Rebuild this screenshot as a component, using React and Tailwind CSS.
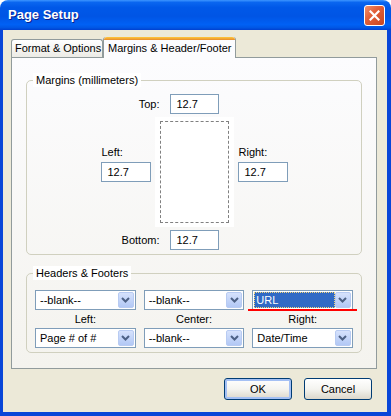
import React from 'react'

function Input({ value, className = '' }) {
  return (
    <div className={`flex h-[20px] items-center border border-[#7f9db9] bg-white pl-[6px] ${className}`}>
      {value}
    </div>
  )
}

function DropButton() {
  return (
    <div className="flex h-[16px] w-[16px] shrink-0 items-center justify-center rounded-[2px] border border-[#b8cbf2] bg-gradient-to-b from-[#d6e2fc] to-[#b2c8f5]">
      <svg width="9" height="6" viewBox="0 0 9 6">
        <path d="M1 1 L4.5 4.5 L8 1" fill="none" stroke="#4d6185" strokeWidth="2" />
      </svg>
    </div>
  )
}

function Select({ value, focused }) {
  return (
    <div className="relative flex h-[20px] items-center border border-[#7f9db9] bg-white p-[1px]">
      {focused ? (
        <div className="flex h-full flex-1 items-center bg-[#316ac5] pl-[2px] text-white outline outline-1 outline-dotted outline-[#f5d77a] -outline-offset-1">
          {value}
        </div>
      ) : (
        <div className="flex-1 pl-[3px]">{value}</div>
      )}
      <DropButton />
      {focused && <div className="absolute -left-[5px] -right-[5px] top-[18px] h-[2px] bg-[#ff0000]" />}
    </div>
  )
}

function Group({ title, className = '', children }) {
  return (
    <div className={`relative rounded-[5px] border border-[#d0d0bf] ${className}`}>
      <span className="absolute -top-[8px] left-[6px] bg-white px-[3px] leading-[14px]">{title}</span>
      {children}
    </div>
  )
}

export default function App() {
  return (
    <div className="flex h-[416px] w-[391px] flex-col overflow-hidden rounded-t-[8px] font-['Liberation_Sans',Arial,sans-serif] text-[11px] text-black">

      {/* Title bar */}
      <div className="flex h-[30px] shrink-0 items-center justify-between bg-[linear-gradient(180deg,#3d95ff_0%,#0a66f0_8%,#0058e8_25%,#0055e5_55%,#0061f5_82%,#0057e5_92%,#0040d0_100%)] pl-[8px] pr-[6px]">
        <span className="text-[13px] font-bold text-white [text-shadow:1px_1px_0_#0a1e8c]">Page Setup</span>
        <div className="flex h-[21px] w-[21px] items-center justify-center rounded-[3px] border border-white bg-[linear-gradient(135deg,#f0916c_0%,#e2603a_40%,#c8461f_100%)]">
          <svg width="11" height="11" viewBox="0 0 11 11">
            <path d="M1.5 1.5 L9.5 9.5 M9.5 1.5 L1.5 9.5" stroke="white" strokeWidth="2.2" strokeLinecap="square" />
          </svg>
        </div>
      </div>

      {/* Body */}
      <div className="flex flex-1 flex-col border-b-[4px] border-l-[3px] border-r-[4px] border-[#0846d8] bg-[#ece9d8] pl-[8px] pr-[10px] pt-[7px]">

        {/* Tabs */}
        <div className="flex h-[20px] items-end">
          <div className="flex h-[18px] w-[92px] items-center rounded-t-[3px] border border-b-0 border-[#919b9c] bg-gradient-to-b from-white to-[#ecebe6] pl-[3px]">
            Format &amp; Options
          </div>
          <div className="relative z-10 -mb-[1px] flex h-[21px] w-[133px] flex-col rounded-t-[3px] border-x border-[#919b9c] bg-[#fcfcfe]">
            <div className="h-[3px] rounded-t-[3px] bg-gradient-to-b from-[#ffc83c] to-[#e68b2c]" />
            <div className="flex flex-1 items-center pb-[2px] pl-[4px]">Margins &amp; Header/Footer</div>
          </div>
        </div>

        {/* Panel */}
        <div className="flex h-[312px] flex-col border border-[#919b9c] bg-gradient-to-b from-[#fcfcfe] to-[#f4f3ee] px-[14px] pt-[22px]">

          <Group title="Margins (millimeters)" className="h-[175px] pt-[13px]">
            <div className="grid grid-cols-[1fr_auto_1fr] items-center">
              <span className="mr-[10px] justify-self-end">Top:</span>
              <Input value="12.7" className="w-[49px]" />
              <span />
            </div>
            <div className="mt-[3px] flex items-center justify-center gap-[4px]">
              <div className="flex w-[50px] flex-col pb-[16px]">
                <span className="mb-[3px] pl-[1px] leading-[13px]">Left:</span>
                <Input value="12.7" />
              </div>
              <div className="h-[110px] w-[79px] bg-white px-[5px] py-[4px]">
                <div className="h-full w-full border border-dashed border-[#808080]" />
              </div>
              <div className="flex w-[50px] flex-col pb-[16px]">
                <span className="mb-[3px] pl-[1px] leading-[13px]">Right:</span>
                <Input value="12.7" />
              </div>
            </div>
            <div className="mt-[3px] grid grid-cols-[1fr_auto_1fr] items-center">
              <span className="mr-[10px] justify-self-end">Bottom:</span>
              <Input value="12.7" className="w-[49px]" />
              <span />
            </div>
          </Group>

          <Group title="Headers & Footers" className="mt-[18px] h-[80px] px-[8px] pt-[16px]">
            <div className="grid grid-cols-3 gap-x-[8px]">
              <Select value="--blank--" />
              <Select value="--blank--" />
              <Select value="URL" focused />
              <div className="flex h-[18px] items-center justify-center">Left:</div>
              <div className="flex h-[18px] items-center justify-center">Center:</div>
              <div className="flex h-[18px] items-center justify-center">Right:</div>
              <Select value="Page # of #" />
              <Select value="--blank--" />
              <Select value="Date/Time" />
            </div>
          </Group>
        </div>

        {/* Buttons */}
        <div className="mt-[9px] flex justify-end gap-[12px] pr-[5px]">
          <button className="flex h-[22px] w-[68px] items-center justify-center rounded-[3px] border border-[#003c74] bg-gradient-to-b from-white via-[#f4f4f0] to-[#dcd7cb] shadow-[inset_0_0_0_2px_#a4c0f4]">
            OK
          </button>
          <button className="flex h-[22px] w-[68px] items-center justify-center rounded-[3px] border border-[#003c74] bg-gradient-to-b from-white via-[#f4f4f0] to-[#dcd7cb]">
            Cancel
          </button>
        </div>
      </div>
    </div>
  )
}
